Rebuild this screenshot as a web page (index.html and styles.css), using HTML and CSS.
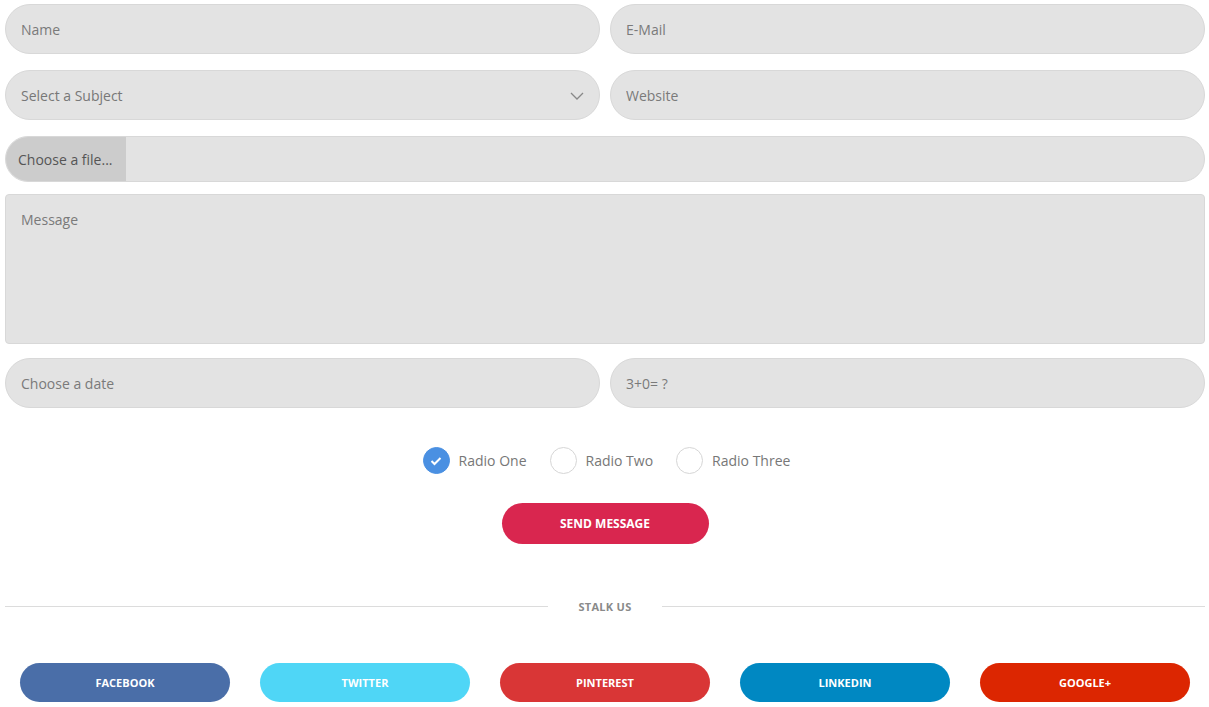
FILE: index.html
```html
<!DOCTYPE html>
<html>
<head>
<meta charset="utf-8">
<link rel="stylesheet" href="styles.css">
</head>
<body>
<div class="page">
  <form class="form">
    <div class="row">
      <div class="field"><input class="input" placeholder="Name"></div>
      <div class="field"><input class="input" placeholder="E-Mail"></div>
    </div>
    <div class="row">
      <div class="field select">
        <div class="input select-box">Select a Subject</div>
        <svg class="chev" width="14" height="8" viewBox="0 0 14 8"><path d="M1 1 L7 7 L13 1" fill="none" stroke="#888" stroke-width="1.3"/></svg>
      </div>
      <div class="field"><input class="input" placeholder="Website"></div>
    </div>
    <div class="row">
      <div class="file">
        <span class="file-btn">Choose a file...</span>
      </div>
    </div>
    <div class="row">
      <div class="textarea">Message</div>
    </div>
    <div class="row">
      <div class="field"><input class="input" placeholder="Choose a date"></div>
      <div class="field"><input class="input" placeholder="3+0= ?"></div>
    </div>
    <div class="radios">
      <label class="radio"><span class="dot checked"><svg width="12" height="10" viewBox="0 0 12 10"><path d="M1.5 5 L4.5 8 L10.5 2" fill="none" stroke="#fff" stroke-width="2"/></svg></span>Radio One</label>
      <label class="radio"><span class="dot"></span>Radio Two</label>
      <label class="radio"><span class="dot"></span>Radio Three</label>
    </div>
    <div class="submit-wrap"><span class="submit">SEND MESSAGE</span></div>
  </form>
  <div class="divider"><span class="line"></span><span class="divider-text">STALK US</span><span class="line"></span></div>
  <div class="social">
    <div class="cell"><span class="sbtn fb">FACEBOOK</span></div>
    <div class="cell"><span class="sbtn tw">TWITTER</span></div>
    <div class="cell"><span class="sbtn pi">PINTEREST</span></div>
    <div class="cell"><span class="sbtn li">LINKEDIN</span></div>
    <div class="cell"><span class="sbtn gp">GOOGLE+</span></div>
  </div>
</div>
</body>
</html>
```
FILE: styles.css
```css
* { box-sizing: border-box; }
html, body { margin: 0; padding: 0; background: #fff; }
body { font-family: "Open Sans", sans-serif; color: #777; font-size: 14px; }
.page { width: 1209px; padding: 4px 4px 0 5px; }
.form { display: flex; flex-direction: column; }
.row { display: flex; gap: 10px; margin-bottom: 16px; }
.row:nth-child(3) { margin-bottom: 12px; }
.row:nth-child(4) { margin-bottom: 14px; }
.field { flex: 1; position: relative; }
.input {
  width: 100%; height: 50px; border: 1px solid #d8d8d8; background: #e3e3e3;
  border-radius: 25px; padding: 0 15px; font-family: "Open Sans", sans-serif;
  font-size: 14px; color: #777; outline: none; display: block;
}
.input::placeholder { color: #7a7a7a; }
.select-box { display: flex; align-items: center; }
.chev { position: absolute; right: 16px; top: 22px; }
.file {
  flex: 1; height: 46px; border: 1px solid #d8d8d8; background: #e3e3e3;
  border-radius: 23px; overflow: hidden; display: flex;
}
.file-btn {
  width: 120px; background: #cccccc; color: #555; display: flex; align-items: center;
  padding-left: 12px; font-size: 14px;
}
.textarea {
  flex: 1; height: 150px; border: 1px solid #d8d8d8; background: #e3e3e3;
  border-radius: 4px; padding: 15px 15px; color: #7a7a7a;
}
.radios { display: flex; justify-content: center; align-items: center; gap: 23px; margin-top: 23px; margin-left: 3px; }
.radio { display: flex; align-items: center; gap: 9px; color: #777; font-size: 14px; }
.dot {
  width: 27px; height: 27px; border-radius: 50%; border: 1px solid #d6d6d6; background: #fff;
  display: flex; align-items: center; justify-content: center;
}
.dot.checked { background: #4a90e2; border-color: #4a90e2; }
.submit-wrap { display: flex; justify-content: center; margin-top: 29px; }
.submit {
  width: 207px; height: 41px; border-radius: 21px; background: #d9264f; color: #fff;
  font-weight: 700; font-size: 12px; display: flex; align-items: center; justify-content: center;
}
.divider { display: flex; align-items: center; margin-top: 55px; }
.line { flex: 1; height: 1px; background: #dcdcdc; }
.divider-text { padding: 0 30px; font-size: 11px; font-weight: 700; color: #8a8a8a; letter-spacing: 0.3px; }
.social { display: flex; margin-top: 49px; }
.cell { flex: 1; display: flex; justify-content: center; }
.sbtn {
  width: 210px; height: 39px; border-radius: 20px; color: #fff; font-weight: 700; font-size: 11px;
  display: flex; align-items: center; justify-content: center;
}
.fb { background: #4a6ea8; }
.tw { background: #4fd6f6; }
.pi { background: #d93636; }
.li { background: #0088c2; }
.gp { background: #dc2601; }
```
